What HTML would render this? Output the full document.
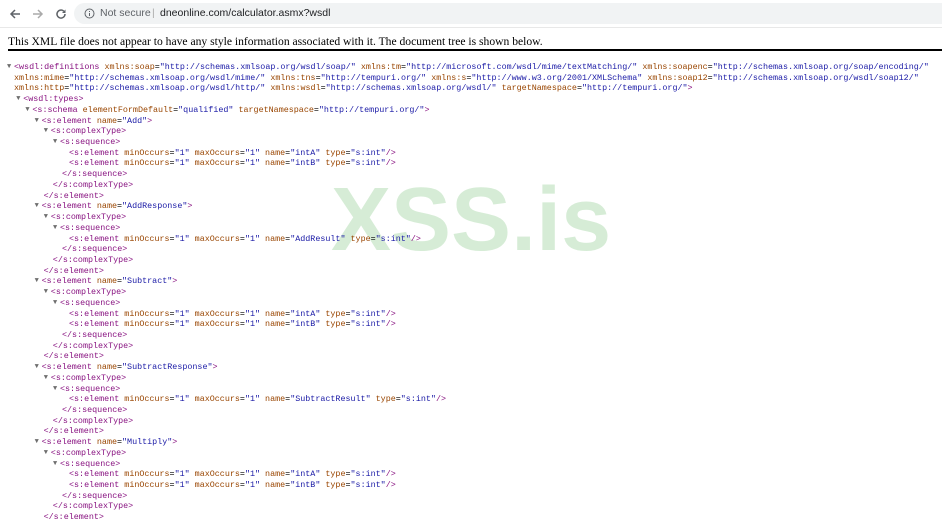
<!DOCTYPE html>
<html><head><meta charset="utf-8"><style>
html,body{margin:0;padding:0;background:#fff;width:942px;height:529px;overflow:hidden;position:relative}
.bar{position:absolute;left:0;top:0;width:942px;height:27px;background:#fff;border-bottom:1px solid #e8e8e8}
.omni{position:absolute;left:74px;top:3px;width:880px;height:21px;background:#f1f3f4;border-radius:11px}
.bar span{position:absolute;font-family:"Liberation Sans",sans-serif;font-size:10.5px;top:7px;color:#5f6368}
.hdr{position:absolute;left:8px;top:35px;font-family:"Liberation Serif",serif;font-size:11.6px;color:#000}
.rule{position:absolute;left:8px;top:49px;width:934px;height:2px;background:#000}
.wm{position:absolute;left:331px;top:169px;font-family:"Liberation Sans",sans-serif;font-weight:bold;font-size:90px;color:#d2ebd2;opacity:.9}
.code{position:absolute;left:0;top:62px;font-family:"Liberation Mono",monospace;font-size:8.4px;line-height:10.72px;white-space:pre;color:#000}
.code div{height:10.72px}
.t{color:#881280}.a{color:#994500}.v{color:#1a1aa6}.tri{color:#6e6e6e;font-size:7px}
</style></head><body>
<div class="bar">
<svg style="position:absolute;left:9px;top:8px" width="12" height="12" viewBox="0 0 12 12"><path d="M11 6H2M6 2L2 6l4 4" stroke="#5f6368" stroke-width="1.5" fill="none"/></svg>
<svg style="position:absolute;left:32px;top:8px" width="12" height="12" viewBox="0 0 12 12"><path d="M1 6h9M6 2l4 4-4 4" stroke="#aaa" stroke-width="1.5" fill="none"/></svg>
<svg style="position:absolute;left:55px;top:8px" width="12" height="12" viewBox="0 0 12 12"><path d="M10 6a4 4 0 1 1-1.2-2.8" stroke="#5f6368" stroke-width="1.5" fill="none"/><path d="M10.5 1.5v3.5H7z" fill="#5f6368"/></svg>
<div class="omni"></div>
<svg style="position:absolute;left:84px;top:8px" width="11" height="11" viewBox="0 0 11 11"><circle cx="5.5" cy="5.5" r="4.5" stroke="#5f6368" fill="none"/><path d="M5.5 5v3M5.5 3v1" stroke="#5f6368"/></svg>
<span style="left:100px">Not secure</span><span style="left:152px;color:#aaa">|</span><span style="left:160px;color:#202124">dneonline.com/calculator.asmx?wsdl</span>
</div>
<div class="hdr">This XML file does not appear to have any style information associated with it. The document tree is shown below.</div>
<div class="rule"></div>
<div class="wm">XSS.is</div>
<div class="code" id="c"></div>
<script>
function T(s){return s.replace(/&/g,'&amp;').replace(/</g,'&lt;').replace(/>/g,'&gt;');}
function fmt(tag,attrs,close){
 var h='<span class="t">&lt;'+tag+'</span>';
 (attrs||[]).forEach(function(p){h+=' <span class="a">'+p[0]+'</span>=<span class="v">"'+T(p[1])+'"</span>';});
 h+='<span class="t">'+(close?'/&gt;':'&gt;')+'</span>';return h;}
var L=[];
function add(lvl,html,tri){L.push([lvl,html,tri]);}
add(0,fmt('wsdl:definitions',[['xmlns:soap','http://schemas.xmlsoap.org/wsdl/soap/'],['xmlns:tm','http://microsoft.com/wsdl/mime/textMatching/'],['xmlns:soapenc','http://schemas.xmlsoap.org/soap/encoding/']]).replace(/<span class="t">&gt;<\/span>$/,''),1);
add(0,'<span class="a">xmlns:mime</span>=<span class="v">"http://schemas.xmlsoap.org/wsdl/mime/"</span> <span class="a">xmlns:tns</span>=<span class="v">"http://tempuri.org/"</span> <span class="a">xmlns:s</span>=<span class="v">"http://www.w3.org/2001/XMLSchema"</span> <span class="a">xmlns:soap12</span>=<span class="v">"http://schemas.xmlsoap.org/wsdl/soap12/"</span>');
add(0,'<span class="a">xmlns:http</span>=<span class="v">"http://schemas.xmlsoap.org/wsdl/http/"</span> <span class="a">xmlns:wsdl</span>=<span class="v">"http://schemas.xmlsoap.org/wsdl/"</span> <span class="a">targetNamespace</span>=<span class="v">"http://tempuri.org/"</span><span class="t">&gt;</span>');
add(1,fmt('wsdl:types'),1);
add(2,fmt('s:schema',[['elementFormDefault','qualified'],['targetNamespace','http://tempuri.org/']]),1);
function leaf(n){add(6,fmt('s:element',[['minOccurs','1'],['maxOccurs','1'],['name',n],['type','s:int']],1));}
function el(name,leaves){
 add(3,fmt('s:element',[['name',name]]),1);
 add(4,fmt('s:complexType'),1);
 add(5,fmt('s:sequence'),1);
 leaves.forEach(leaf);
 add(5,'<span class="t">&lt;/s:sequence&gt;</span>');
 add(4,'<span class="t">&lt;/s:complexType&gt;</span>');
 add(3,'<span class="t">&lt;/s:element&gt;</span>');
}
el('Add',['intA','intB']);el('AddResponse',['AddResult']);el('Subtract',['intA','intB']);el('SubtractResponse',['SubtractResult']);el('Multiply',['intA','intB']);
var out='';
L.forEach(function(l){
 var x=14+9.2*l[0]; if(l[0]==6)x=69; else if(!l[2]&&l[0]>=3)x+=2;
 out+='<div style="position:relative;padding-left:'+x+'px">'+(l[2]?'<span class="tri" style="position:absolute;left:'+(x-7)+'px">▼</span>':'')+l[1]+'</div>';
});
document.getElementById('c').innerHTML=out;
</script>
</body></html>
